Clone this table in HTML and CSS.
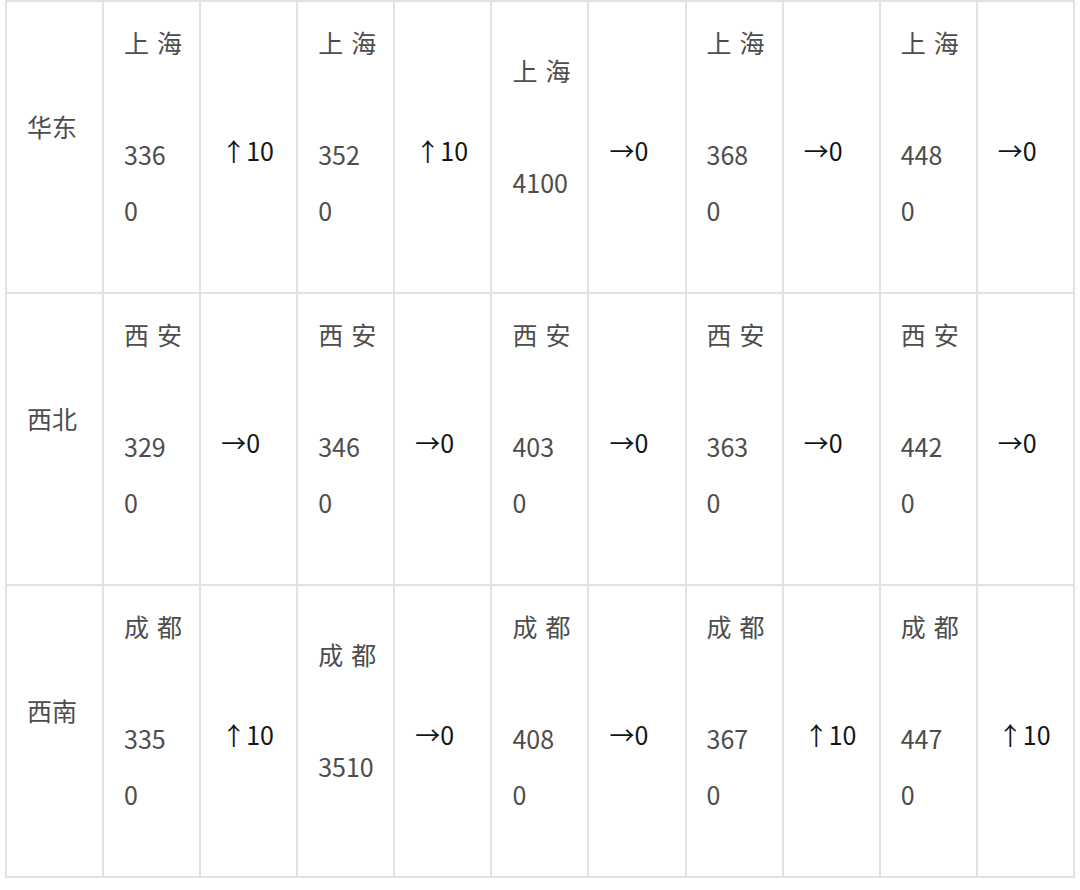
FILE: index.html
```html
<!DOCTYPE html>
<html lang="zh">
<head>
<meta charset="utf-8">
<link rel="stylesheet" href="styles.css">
</head>
<body>
<table class="grid">
  <tr>
    <td class="label">华东</td>
    <td class="val"><div class="city">上海</div><div class="num">336<br>0</div></td>
    <td class="chg">↑10</td>
    <td class="val"><div class="city">上海</div><div class="num">352<br>0</div></td>
    <td class="chg">↑10</td>
    <td class="val"><div class="city">上海</div><div class="num">4100</div></td>
    <td class="chg">→0</td>
    <td class="val"><div class="city">上海</div><div class="num">368<br>0</div></td>
    <td class="chg">→0</td>
    <td class="val"><div class="city">上海</div><div class="num">448<br>0</div></td>
    <td class="chg">→0</td>
  </tr>
  <tr>
    <td class="label">西北</td>
    <td class="val"><div class="city">西安</div><div class="num">329<br>0</div></td>
    <td class="chg">→0</td>
    <td class="val"><div class="city">西安</div><div class="num">346<br>0</div></td>
    <td class="chg">→0</td>
    <td class="val"><div class="city">西安</div><div class="num">403<br>0</div></td>
    <td class="chg">→0</td>
    <td class="val"><div class="city">西安</div><div class="num">363<br>0</div></td>
    <td class="chg">→0</td>
    <td class="val"><div class="city">西安</div><div class="num">442<br>0</div></td>
    <td class="chg">→0</td>
  </tr>
  <tr>
    <td class="label">西南</td>
    <td class="val"><div class="city">成都</div><div class="num">335<br>0</div></td>
    <td class="chg">↑10</td>
    <td class="val"><div class="city">成都</div><div class="num">3510</div></td>
    <td class="chg">→0</td>
    <td class="val"><div class="city">成都</div><div class="num">408<br>0</div></td>
    <td class="chg">→0</td>
    <td class="val"><div class="city">成都</div><div class="num">367<br>0</div></td>
    <td class="chg">↑10</td>
    <td class="val"><div class="city">成都</div><div class="num">447<br>0</div></td>
    <td class="chg">↑10</td>
  </tr>
</table>
</body>
</html>
```
FILE: styles.css
```css
html, body {
  margin: 0;
  background: #ffffff;
}
body {
  padding: 0 0 0 5px;
  font-family: "Noto Sans CJK SC", "Noto Sans", sans-serif;
  font-size: 25px;
  color: #4d4d4d;
}
.grid {
  border-collapse: collapse;
  table-layout: fixed;
  width: 1070px;
}
.grid td {
  border: 2px solid #e2e2e2;
  height: 292px;
  box-sizing: border-box;
  padding: 12px 0 54px 20px;
  vertical-align: middle;
  line-height: 56px;
  text-align: left;
  white-space: nowrap;
}
.grid td.chg {
  padding: 17px 0 12px 20px;
  color: #151515;
}
.city {
  letter-spacing: 8px;
}
.num {
  margin-top: 56px;
}
```
